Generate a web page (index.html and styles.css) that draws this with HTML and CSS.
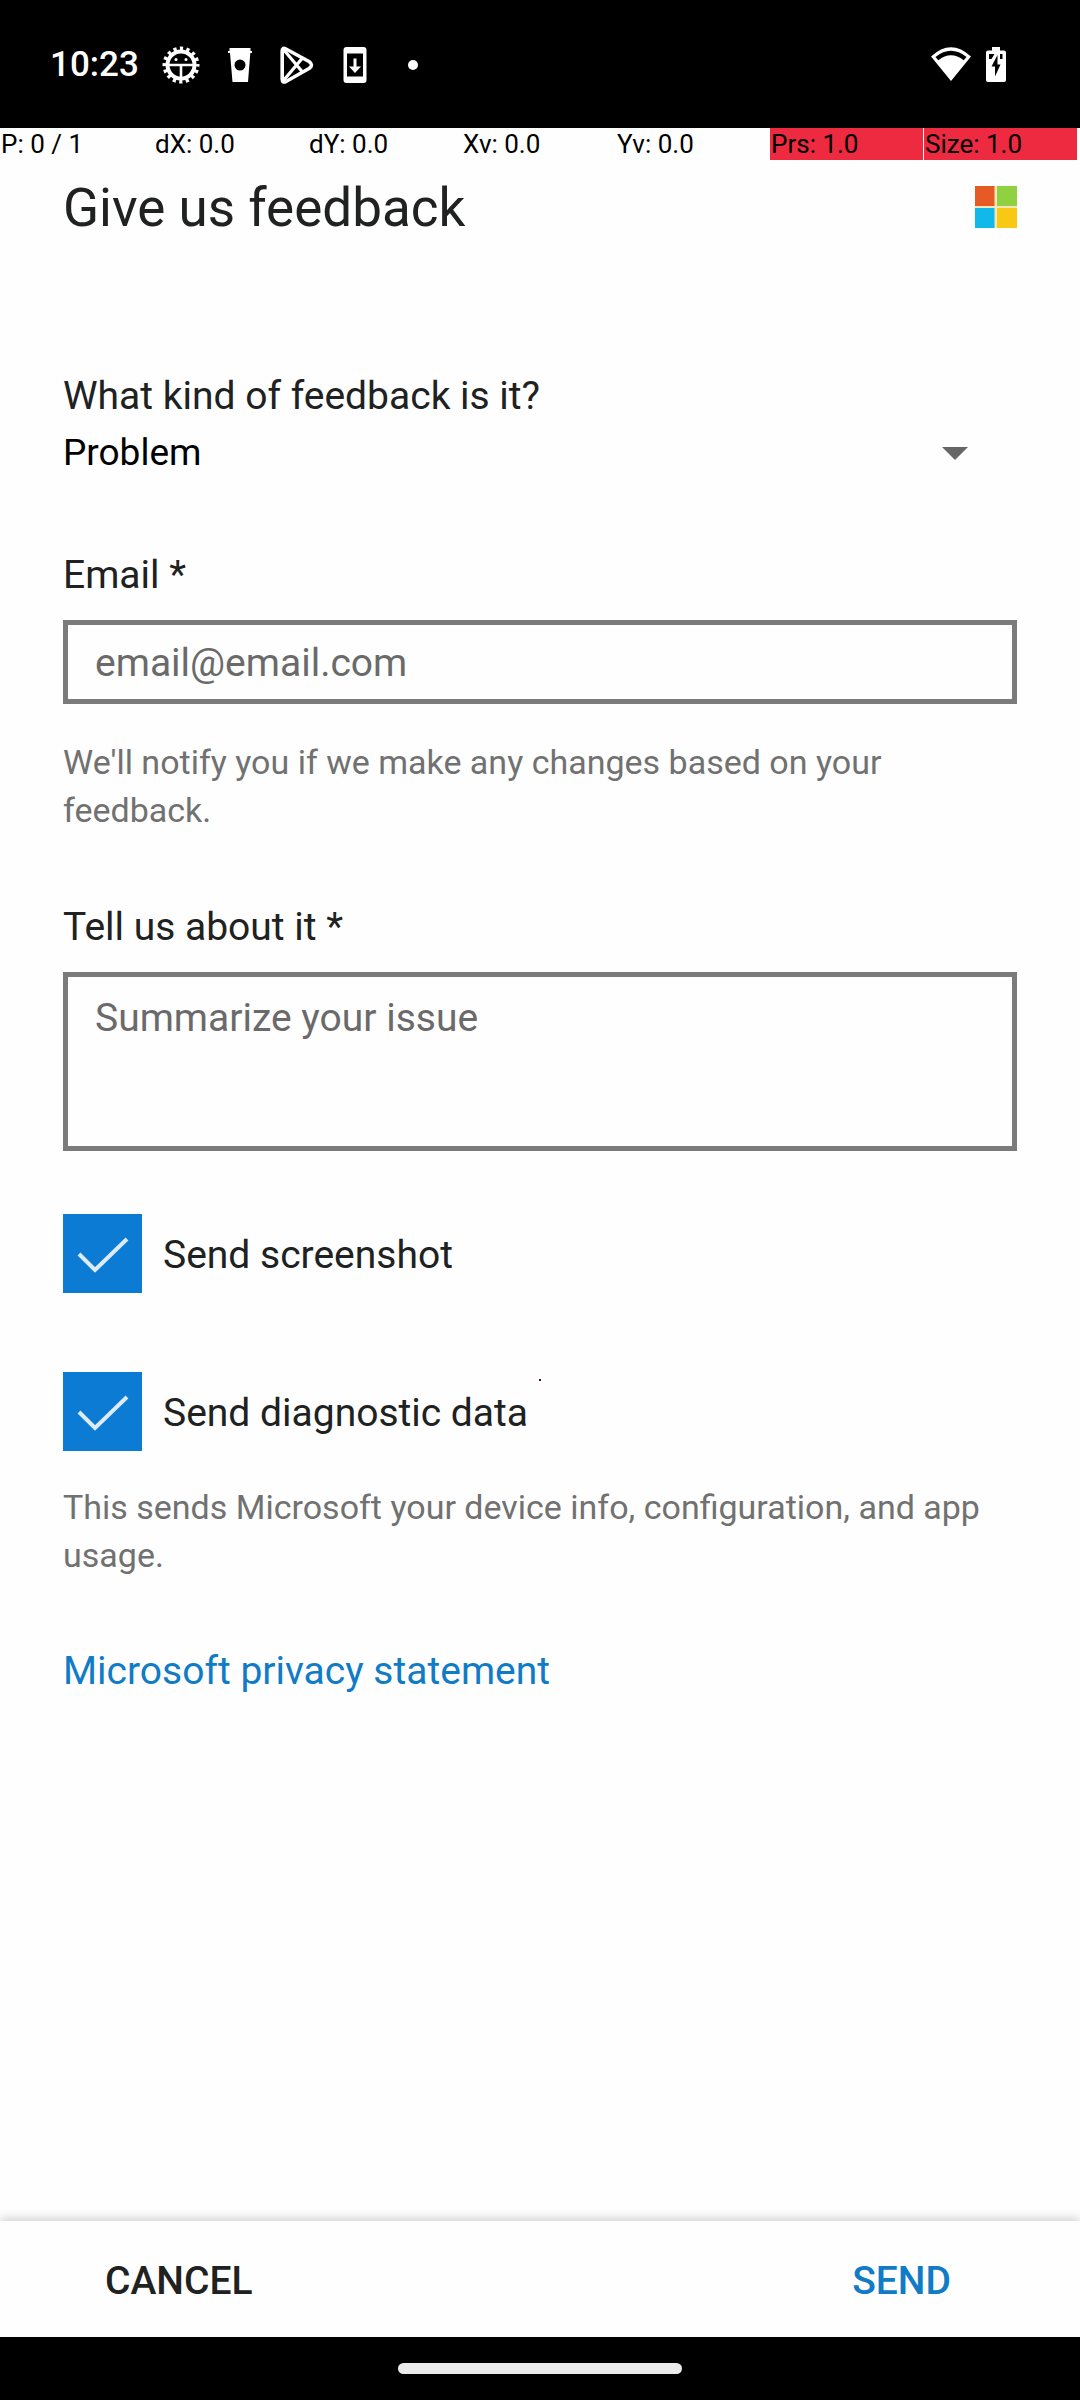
FILE: index.html
```html
<!DOCTYPE html>
<html lang="en">
<head>
<meta charset="utf-8">
<meta name="viewport" content="width=device-width, initial-scale=1">
<title>Give us feedback</title>
<link rel="stylesheet" href="styles.css">
</head>
<body>
<div class="screen">
  <header class="status">
    <div class="status-left">
      <time class="clock">10:23</time>
      <svg class="gear" width="38" height="38" viewBox="-19 -19 38 38" aria-hidden="true">
        <circle r="13.5" fill="none" stroke="#fff" stroke-width="4"/>
        <circle r="16.5" fill="none" stroke="#fff" stroke-width="4" stroke-dasharray="3.2 3.28" stroke-dashoffset="1.6"/>
        <path d="M-13 0H13M0 0V13" stroke="#fff" stroke-width="2.6"/>
        <circle cx="-5" cy="-5.500" r="1.500" fill="#fff"/>
        <circle cx="5" cy="-5.500" r="1.500" fill="#fff"/>
      </svg>
      <svg class="cup" width="24" height="36" viewBox="0 0 24 36" aria-hidden="true">
        <path fill="#fff" fill-rule="evenodd" d="M1.500 1H22.500V4H24V6H22.300L20 35H4.500L2 6H0V4H1.500ZM12 12.500A5.500 5.500 0 1 0 12 23.500A5.500 5.500 0 1 0 12 12.500Z"/>
      </svg>
      <svg class="play" width="34" height="38" viewBox="0 0 34 38" aria-hidden="true">
        <g fill="none" stroke="#fff" stroke-width="3.600" stroke-linejoin="round">
          <path d="M2.200 5Q2.200 1 6 3L29 15.500Q34 19 29 22.500L6 35.500Q2.200 37 2.200 33Z"/>
          <path d="M3.500 3.500L22.500 26M3.500 34.500L22.500 12" stroke-width="3.200"/>
        </g>
      </svg>
      <svg class="phone" width="24" height="38" viewBox="0 0 24 38" aria-hidden="true">
        <path fill="#fff" fill-rule="evenodd" d="M3.500 1H20.500Q23.500 1 23.500 4V34Q23.500 37 20.500 37H3.500Q.5 37 .5 34V4Q.5 1 3.500 1ZM4 7.500V30.500H20V7.500Z"/>
        <path fill="#fff" d="M10.500 12.500H13.500V20.500H18L12 27L6 20.500H10.500Z"/>
      </svg>
      <span class="more"></span>
    </div>
    <div class="status-right">
      <svg width="40" height="34" viewBox="0 0 40 34" aria-hidden="true">
        <path fill="#fff" fill-rule="evenodd" d="M0 9.500Q20-9 40 9.500L20 34ZM4.500 10L7.300 13.200Q20 3.500 32.700 13.200L35.500 10Q20-2.500 4.500 10Z"/>
      </svg>
      <svg width="20" height="35" viewBox="0 0 20 35" aria-hidden="true">
        <path fill="#fff" fill-rule="evenodd" d="M6 0H14V3.500H18Q20 3.500 20 5.500V33Q20 35 18 35H2Q0 35 0 33V5.500Q0 3.500 2 3.500H6ZM11.500 8L5.500 19.500H9V29.500L14.500 17.500H11.500ZM3 7V12H5.500L8.500 7ZM14 7V12H16.500V7Z"/>
      </svg>
    </div>
  </header>

  <div class="pointer">
    <span>P: 0 / 1</span>
    <span>dX: 0.0</span>
    <span>dY: 0.0</span>
    <span>Xv: 0.0</span>
    <span>Yv: 0.0</span>
    <span class="hot">Prs: 1.0</span>
    <span class="hot">Size: 1.0</span>
  </div>

  <form class="form">
    <main class="content">
      <div class="heading">
        <h1>Give us feedback</h1>
        <svg width="42" height="42" viewBox="0 0 42 42" role="img" aria-label="Microsoft">
          <path fill="#f3e6b8" d="M0 0H42V42H0Z"/>
          <path fill="#e65a25" d="M0 0H19.500V20H0Z"/>
          <path fill="#8fd141" d="M22 0H42V20H22Z"/>
          <path fill="#10b9ea" d="M0 22H19.500V42H0Z"/>
          <path fill="#f8c814" d="M22 22H42V42H22Z"/>
        </svg>
      </div>

      <div class="field kind">
        <label for="kind">What kind of feedback is it?</label>
        <div class="picker">
          <select id="kind"><option>Problem</option></select>
          <svg class="arrow" width="26" height="13" viewBox="0 0 26 13" aria-hidden="true"><path fill="#666" d="M0 0H26L13 13Z"/></svg>
        </div>
      </div>

      <div class="field email">
        <label for="email">Email *</label>
        <input class="box" id="email" type="email" placeholder="email@email.com">
        <p class="hint">We'll notify you if we make any changes based on your feedback.</p>
      </div>

      <div class="field">
        <label for="about">Tell us about it *</label>
        <textarea class="box about" id="about" placeholder="Summarize your issue"></textarea>
      </div>

      <div class="checks">
        <label class="check"><input type="checkbox" checked><svg class="tick" width="79" height="79" viewBox="0 0 79 79" aria-hidden="true"><path d="M16 40L32 56L64 25"/></svg><span>Send screenshot</span></label>
        <label class="check"><input type="checkbox" checked><svg class="tick" width="79" height="79" viewBox="0 0 79 79" aria-hidden="true"><path d="M16 40L32 56L64 25"/></svg><span>Send diagnostic data</span></label>
      </div>
      <p class="hint usage">This sends Microsoft your device info, configuration, and app usage.</p>
      <a class="privacy" href="#">Microsoft privacy statement</a>
    </main>
    <div class="actions">
      <button type="button">CANCEL</button>
      <button type="submit" class="send">SEND</button>
    </div>
  </form>

  <footer class="nav"><span class="handle"></span></footer>
  <span class="touch"></span>
</div>
</body>
</html>
```
FILE: styles.css
```css
* {
  box-sizing: border-box;
}

body {
  margin: 0;
  background: #fefefe;
  color: #202121;
  font-family: Roboto, "Liberation Sans", sans-serif;
  font-size: 39px;
  line-height: 46px;
}

.screen {
  position: relative;
  display: flex;
  flex-direction: column;
  min-height: 100vh;
}

svg {
  display: block;
  flex: none;
}

/* System status bar */
.status {
  display: flex;
  justify-content: space-between;
  align-items: center;
  height: 128px;
  padding: 0 74px 0 50px;
  background: #000;
  color: #fff;
}

.status-left,
.status-right {
  display: flex;
  align-items: center;
}

.status-left {
  padding-top: 2px;
}

.status-right {
  gap: 15px;
}

.clock {
  width: 112px;
  font-size: 35px;
  font-weight: 500;
}

.cup {
  margin-left: 28px;
}

.play {
  margin-left: 28px;
}

.phone {
  margin-left: 29px;
}

.more {
  width: 10px;
  height: 10px;
  margin-left: 41px;
  border-radius: 50%;
  background: #fff;
}

/* Pointer debug strip */
.pointer {
  display: grid;
  grid-template-columns: repeat(7, 1fr);
  gap: 1px;
  height: 32px;
  padding-right: 3px;
  color: #000;
  font-size: 26px;
  line-height: 32px;
}

.pointer span {
  padding-left: 1px;
  white-space: nowrap;
}

.pointer .hot {
  background: #ed2a3f;
}

/* Form */
.form {
  display: flex;
  flex: 1;
  flex-direction: column;
}

.content {
  display: flex;
  flex: 1;
  flex-direction: column;
  padding: 15px 63px 40px;
}

.heading {
  display: flex;
  justify-content: space-between;
  align-items: center;
}

h1 {
  margin: 0;
  padding-top: 2px;
  font-size: 53px;
  font-weight: 400;
  line-height: 62px;
}

.field {
  display: flex;
  flex-direction: column;
  margin-top: 70px;
}

.field.kind {
  margin-top: 134px;
}

.field.email {
  margin-top: 76px;
}

.picker {
  display: grid;
  align-items: center;
  margin-top: 11px;
}

.picker > * {
  grid-area: 1 / 1;
}

.picker select {
  width: 100%;
  height: 46px;
  padding: 0;
  border: 0;
  background: none;
  color: #000;
  font: inherit;
  font-size: 37px;
  appearance: none;
}

.arrow {
  justify-self: end;
  margin-right: 49px;
  pointer-events: none;
}

.box {
  width: 100%;
  height: 84px;
  margin: 22px 0 0;
  padding: 2px 27px 0;
  border: 5px solid #7b7b7b;
  border-radius: 0;
  outline: 0;
  background: none;
  color: #202121;
  font: inherit;
}

.box::placeholder {
  color: #6a6a6a;
  opacity: 1;
}

.about {
  height: 179px;
  padding: 18px 27px;
  resize: none;
}

.hint {
  margin: 34px 0 0;
  color: #717171;
  font-size: 34px;
  line-height: 48px;
}

.checks {
  display: flex;
  flex-direction: column;
  gap: 79px;
  margin-top: 63px;
}

.check {
  display: grid;
  grid-template-columns: 79px 1fr;
  column-gap: 21px;
  align-items: center;
}

.check span {
  padding-top: 2px;
}

.check input {
  grid-area: 1 / 1;
  width: 79px;
  height: 79px;
  margin: 0;
  background: #0c7bd3;
  appearance: none;
}

.tick {
  grid-area: 1 / 1;
  fill: none;
  stroke: #dcebf8;
  stroke-width: 4;
  visibility: hidden;
}

.check input:checked + .tick {
  visibility: visible;
}

.usage {
  margin-top: 32px;
}

.privacy {
  align-self: flex-start;
  margin-top: 69px;
  color: #107bc6;
  text-decoration: none;
}

/* Bottom actions */
.actions {
  display: flex;
  justify-content: space-between;
  height: 116px;
  padding: 0 105px;
  background: #fefefe;
  box-shadow: 0 -2px 10px rgba(0, 0, 0, 0.2);
}

.actions button {
  padding: 3px 0 0;
  border: 0;
  background: none;
  color: inherit;
  font: inherit;
  font-weight: 500;
}

.actions .send {
  margin-right: 24px;
  color: #107bc6;
}

/* Gesture navigation */
.nav {
  position: relative;
  display: flex;
  justify-content: center;
  align-items: center;
  height: 63px;
  background: #000;
}

.handle {
  width: 284px;
  height: 11px;
  border-radius: 6px;
  background: #ebebeb;
}

/* Last touch location, drawn over the page */
.touch {
  position: absolute;
  top: 1379px;
  left: calc(50% - 1px);
  width: 2px;
  height: 2px;
  background: #4a1020;
}
```
